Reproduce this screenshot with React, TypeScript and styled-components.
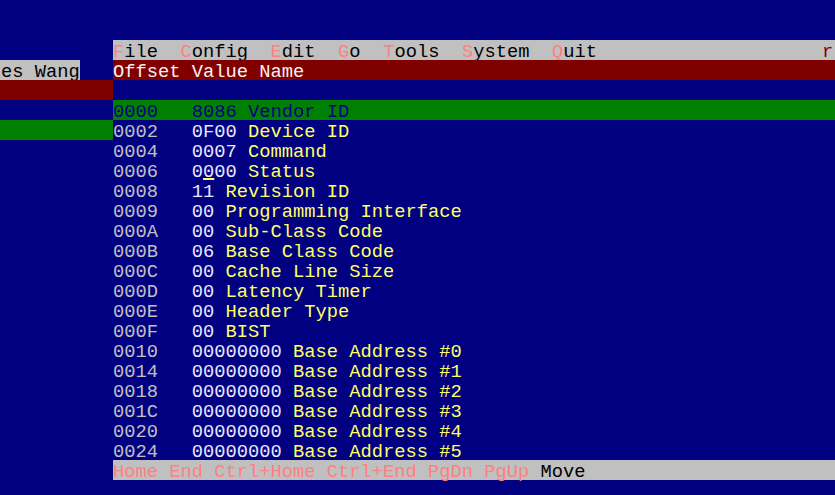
import React from 'react'
import styled, {createGlobalStyle} from 'styled-components'

const NAVY = '#000080'
const GREY = '#c0c0c0'
const MAROON = '#800000'
const GREEN = '#008000'
const HOT = '#ff8080'
const YELLOW = '#ffff66'

type Reg = {offset: string; value: string; name: string; cursor?: number}

const registers: Reg[] = [
  {offset: '0000', value: '8086', name: 'Vendor ID'},
  {offset: '0002', value: '0F00', name: 'Device ID'},
  {offset: '0004', value: '0007', name: 'Command'},
  {offset: '0006', value: '0000', name: 'Status', cursor: 1},
  {offset: '0008', value: '11', name: 'Revision ID'},
  {offset: '0009', value: '00', name: 'Programming Interface'},
  {offset: '000A', value: '00', name: 'Sub-Class Code'},
  {offset: '000B', value: '06', name: 'Base Class Code'},
  {offset: '000C', value: '00', name: 'Cache Line Size'},
  {offset: '000D', value: '00', name: 'Latency Timer'},
  {offset: '000E', value: '00', name: 'Header Type'},
  {offset: '000F', value: '00', name: 'BIST'},
  {offset: '0010', value: '00000000', name: 'Base Address #0'},
  {offset: '0014', value: '00000000', name: 'Base Address #1'},
  {offset: '0018', value: '00000000', name: 'Base Address #2'},
  {offset: '001C', value: '00000000', name: 'Base Address #3'},
  {offset: '0020', value: '00000000', name: 'Base Address #4'},
  {offset: '0024', value: '00000000', name: 'Base Address #5'},
]

const menu = ['File', 'Config', 'Edit', 'Go', 'Tools', 'System', 'Quit']
const keys = 'Home End Ctrl+Home Ctrl+End PgDn PgUp'

export default function App() {
  const selected = 0

  return (
    <>
      <GlobalStyle />
      <Screen>
        <SideWindow>
          <Row />
          <Row $bg={GREY} $fg="#000" $width="79px">
            es Wang
          </Row>
          <Row $bg={MAROON} />
          <Row />
          <Row $bg={GREEN} />
        </SideWindow>

        <MainWindow>
          <Row $bg={GREY} $fg="#000">
            {menu.map((item) => (
              <MenuItem key={item}>
                <Hot>{item[0]}</Hot>
                {item.slice(1)}
              </MenuItem>
            ))}
            <Corner>r</Corner>
          </Row>
          <Row $bg={MAROON} $fg="#f8f0f0">
            Offset Value Name
          </Row>
          <Row />
          {registers.map((reg, i) => {
            const active = i === selected
            return (
              <Row key={reg.offset} $bg={active ? GREEN : undefined}>
                <Offset $active={active}>{reg.offset}</Offset>
                <Value $active={active}>
                  {reg.cursor === undefined ? (
                    reg.value
                  ) : (
                    <>
                      {reg.value.slice(0, reg.cursor)}
                      <Cursor>{reg.value[reg.cursor]}</Cursor>
                      {reg.value.slice(reg.cursor + 1)}
                    </>
                  )}
                </Value>
                <Name $active={active}>{reg.name}</Name>
              </Row>
            )
          })}
          <Row $bg={GREY} $fg="#000">
            <Hot>{keys}</Hot>
            <MoveLabel>Move</MoveLabel>
          </Row>
        </MainWindow>
      </Screen>
    </>
  )
}

const GlobalStyle = createGlobalStyle`
  body {
    margin: 0;
    background: ${NAVY};
  }
`

const Screen = styled.div`
  display: grid;
  grid-template-columns: 113px 1fr;
  align-items: start;
  width: 835px;
  height: 495px;
  padding-top: 40px;
  box-sizing: border-box;
  overflow: hidden;
  background: ${NAVY};
  font-family: 'Liberation Mono', 'Courier New', monospace;
  font-size: 18.76px;
`

const SideWindow = styled.div`
  display: flex;
  flex-direction: column;
  overflow: hidden;
`

const MainWindow = styled.div`
  display: flex;
  flex-direction: column;
  min-width: 0;
`

const Row = styled.div<{$bg?: string; $fg?: string; $width?: string}>`
  display: flex;
  height: 20px;
  line-height: 24px;
  width: ${(p) => p.$width || 'auto'};
  white-space: pre;
  background: ${(p) => p.$bg || 'transparent'};
  color: ${(p) => p.$fg || GREY};
  padding-left: ${(p) => (p.$width ? '1px' : '0')};
`

const MenuItem = styled.span`
  margin-right: 2ch;
`

const Hot = styled.span`
  color: ${HOT};
`

const Corner = styled.span`
  margin-left: 18ch;
  color: ${MAROON};
`

const MoveLabel = styled.span`
  margin-left: 1ch;
`

const Offset = styled.span<{$active: boolean}>`
  width: 7ch;
  color: ${(p) => (p.$active ? NAVY : GREY)};
`

const Value = styled.span<{$active: boolean}>`
  color: ${(p) => (p.$active ? NAVY : '#e8e8ff')};
`

const Name = styled.span<{$active: boolean}>`
  margin-left: 1ch;
  color: ${(p) => (p.$active ? NAVY : YELLOW)};
`

const Cursor = styled.span`
  text-decoration: underline;
  text-decoration-color: ${YELLOW};
  text-decoration-thickness: 2px;
  text-underline-offset: 1px;
`
